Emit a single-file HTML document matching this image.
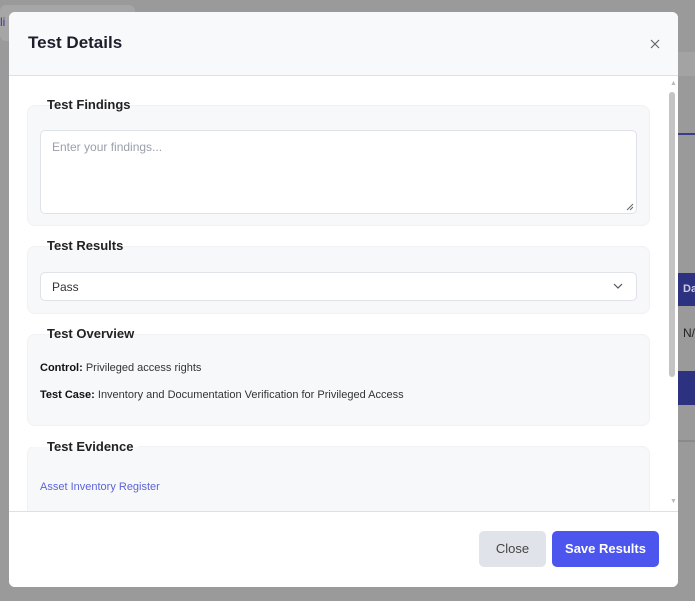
<!DOCTYPE html>
<html><head><style>
body{margin:0;width:695px;height:601px;background:#9a9a9a;font-family:"Liberation Sans",sans-serif;position:relative;overflow:hidden}
.a{position:absolute}
.modal{left:9px;top:12px;width:669px;height:575px;background:#fff;border-radius:6px;overflow:hidden}
.hdr{left:0;top:0;width:669px;height:63px;background:#f8f9fb;border-bottom:1px solid #dde1e6}
.box{left:18px;width:621px;background:#f7f8fa;border-radius:8px;border:1px solid #eff1f4}
.lg{font-size:13px;font-weight:bold;color:#222;background:#fff;padding:0 6px 0 20px;left:18px;height:8px;line-height:16px;overflow:visible}
.inp{background:#fff;border:1px solid #dfe2e7;border-radius:5px;left:31px;width:595px}
.t{font-size:11px;color:#333}
</style></head><body>
<div class="a" style="left:0;top:5px;width:135px;height:36px;background:#a6a6a6;border-radius:6px"></div>
<div class="a" style="left:0;top:15px;color:#3a3a9a;font-size:12px">li</div>
<div class="a" style="left:678px;top:52px;width:17px;height:24px;background:#a3a3a3"></div>
<div class="a" style="left:678px;top:133px;width:17px;height:2px;background:#3a3e8a"></div>
<div class="a" style="left:678px;top:273px;width:17px;height:33px;background:#2d3280;color:#ccd;font-size:11px;font-weight:bold;line-height:33px;padding-left:5px">Da</div>
<div class="a" style="left:683px;top:326px;font-size:12px;color:#222">N/</div>
<div class="a" style="left:678px;top:371px;width:17px;height:34px;background:#2d3280"></div>
<div class="a" style="left:678px;top:440px;width:17px;height:2px;background:#8a8a8a"></div>
<div class="a modal">
 <div class="a hdr"><div class="a" style="left:19px;top:21px;font-size:17px;font-weight:bold;color:#1c1f2b">Test Details</div>
 <svg class="a" style="left:641px;top:27px" width="10" height="10"><path d="M1 1l8 8M9 1l-8 8" stroke="#666" stroke-width="1.2"/></svg></div>
 <div class="a" style="left:661px;top:68px;width:5px;height:5px;color:#bbb;font-size:7px">▲</div>
 <div class="a" style="left:660px;top:80px;width:6px;height:285px;background:#c4c4c4;border-radius:3px"></div>
 <div class="a" style="left:661px;top:486px;color:#bbb;font-size:7px">▼</div>
 <div class="a box" style="top:93px;height:119px"></div>
 <div class="a lg" style="top:85px">Test Findings</div>
 <div class="a inp" style="top:118px;height:82px"><div class="a" style="left:11px;top:9px;font-size:12px;color:#9aa0aa">Enter your findings...</div>
  <svg class="a" style="right:2px;bottom:2px" width="8" height="8"><path d="M7 1L1 7M7 4L4 7" stroke="#666" stroke-width="1"/></svg></div>
 <div class="a box" style="top:234px;height:66px"></div>
 <div class="a lg" style="top:226px">Test Results</div>
 <div class="a inp" style="top:260px;height:27px"><div class="a" style="left:11px;top:7px;font-size:12px;color:#333">Pass</div>
  <svg class="a" style="left:571px;top:8px" width="12" height="10"><path d="M2 3l4 4 4-4" stroke="#555" fill="none" stroke-width="1.2"/></svg></div>
 <div class="a box" style="top:322px;height:90px"></div>
 <div class="a lg" style="top:314px">Test Overview</div>
 <div class="a t" style="left:31px;top:350px"><b style="color:#111">Control:</b> Privileged access rights</div>
 <div class="a t" style="left:31px;top:377px"><b style="color:#111">Test Case:</b> Inventory and Documentation Verification for Privileged Access</div>
 <div class="a box" style="top:434px;height:100px"></div>
 <div class="a lg" style="top:427px">Test Evidence</div>
 <div class="a" style="left:31px;top:469px;font-size:11px;color:#5f63d6">Asset Inventory Register</div>
 <div class="a" style="left:0;top:499px;width:669px;height:76px;background:#fff;border-top:1px solid #dde1e6"></div>
 <div class="a" style="left:470px;top:519px;width:67px;height:36px;background:#e0e3ea;border-radius:5px;font-size:13px;color:#444;text-align:center;line-height:36px">Close</div>
 <div class="a" style="left:543px;top:519px;width:107px;height:36px;background:#4c55ee;border-radius:5px;font-size:13px;font-weight:bold;color:#fff;text-align:center;line-height:36px">Save Results</div>
</div>
</body></html>
